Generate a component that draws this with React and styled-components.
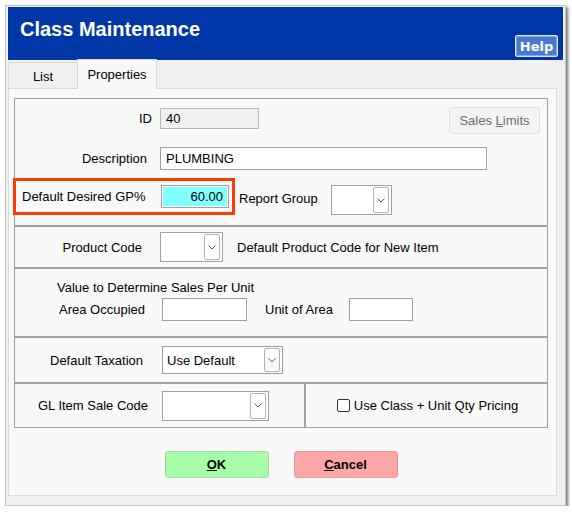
import React from 'react';
import styled, { createGlobalStyle } from 'styled-components';

const GlobalStyle = createGlobalStyle`
  html, body {
    margin: 0;
    padding: 0;
    background: #ffffff;
  }
  body {
    font-family: "Liberation Sans", Arial, sans-serif;
    font-size: 13px;
    color: #000;
  }
`;

const Window = styled.div`
  box-sizing: border-box;
  margin: 5px 0 0 5px;
  width: 561px;
  height: 501px;
  background: #f0f0f0;
  border: 1px solid #c4c4c4;
  box-shadow: 2px 2px 3px rgba(0, 0, 0, 0.55);
  padding: 1px 2px 0 2px;
  display: flex;
  flex-direction: column;
`;

const Header = styled.div`
  height: 53px;
  background: #0037a6;
  display: flex;
  justify-content: space-between;
  align-items: flex-start;
`;

const Title = styled.h1`
  margin: 10px 0 0 12px;
  font-size: 20px;
  line-height: 24px;
  font-weight: bold;
  color: #fff;
`;

const HelpButton = styled.button`
  box-sizing: border-box;
  margin: 28px 5px 0 0;
  width: 43px;
  height: 22px;
  padding: 0;
  background: #4b78cf;
  border: 1px solid #dfe6f5;
  border-radius: 2px;
  box-shadow: inset 0 0 0 1px #86a3e0;
  color: #fff;
  font-family: "DejaVu Sans", Verdana, sans-serif;
  font-weight: bold;
  font-size: 13px;
`;

const Body = styled.div`
  padding-right: 6px;
  display: flex;
  flex-direction: column;
`;

const TabStrip = styled.div`
  height: 29px;
  display: flex;
  align-items: flex-end;
  position: relative;
  z-index: 1;
  margin-bottom: -1px;
`;

const Tab = styled.div`
  box-sizing: border-box;
  width: ${p => p.$w}px;
  height: ${p => (p.$active ? 30 : 27)}px;
  background: ${p => (p.$active ? '#f9f9f9' : '#f0f0f0')};
  border: 1px solid #d9d9d9;
  border-bottom: ${p => (p.$active ? 'none' : '1px solid #d9d9d9')};
  margin-left: ${p => (p.$active ? -1 : 0)}px;
  display: flex;
  justify-content: center;
  padding-top: ${p => (p.$active ? 7 : 6)}px;
  line-height: 15px;
`;

const Panel = styled.div`
  box-sizing: border-box;
  height: 408px;
  background: #f9f9f9;
  border: 1px solid #dcdcdc;
  padding: 9px 8px 0 5px;
  display: flex;
  flex-direction: column;
`;

const Section = styled.div`
  box-sizing: border-box;
  height: ${p => p.$h}px;
  border: 1px solid #a0a0a0;
  display: flex;
  flex-direction: ${p => (p.$column ? 'column' : 'row')};
  align-items: ${p => (p.$column ? 'stretch' : 'center')};
  padding-top: ${p => p.$pt || 0}px;
`;

const Row = styled.div`
  display: flex;
  align-items: ${p => p.$align || 'center'};
  margin-top: ${p => p.$mt || 0}px;
`;

const Label = styled.span`
  box-sizing: border-box;
  width: ${p => (p.$w ? `${p.$w}px` : 'auto')};
  margin-right: ${p => p.$gap || 0}px;
  margin-left: ${p => p.$ml || 0}px;
  margin-top: ${p => p.$mt || 0}px;
  text-align: ${p => (p.$w ? 'right' : 'left')};
  line-height: 21px;
  white-space: nowrap;
`;

const TextInput = styled.div`
  box-sizing: border-box;
  width: ${p => p.$w}px;
  height: ${p => p.$h || 23}px;
  margin-top: ${p => p.$mt || 0}px;
  background: ${p => p.$bg || '#ffffff'};
  border: 1px solid ${p => p.$border || '#a0a0a0'};
  box-shadow: ${p => (p.$ring ? 'inset 0 0 0 1px #ffffff' : 'none')};
  display: flex;
  align-items: center;
  justify-content: ${p => (p.$right ? 'flex-end' : 'flex-start')};
  padding: 0 5px 0 5px;
  white-space: nowrap;
`;

const SalesLimits = styled.button`
  box-sizing: border-box;
  margin: 0 7px 0 auto;
  width: 91px;
  height: 27px;
  padding: 0;
  background: #f4f4f4;
  border: 1px solid #e0e0e0;
  border-radius: 3px;
  color: #6d6d6d;
  font-family: "Liberation Sans", Arial, sans-serif;
  font-size: 13px;
`;

const Highlight = styled.div`
  box-sizing: border-box;
  width: 222px;
  height: 37px;
  margin-left: -2px;
  border: 3px solid #ff3a0a;
  display: flex;
  align-items: center;
  padding: 0 3px;
  position: relative;
`;

const HighlightLabel = styled.span`
  flex: 1;
  padding-left: 3px;
  white-space: nowrap;
`;

const SelectBox = styled.div`
  box-sizing: border-box;
  width: ${p => p.$w}px;
  height: ${p => p.$h || 30}px;
  align-self: ${p => p.$self || 'auto'};
  background: #fff;
  border: 1px solid #a0a0a0;
  display: flex;
  align-items: stretch;
  padding: 1px 2px 1px 4px;
`;

const SelectValue = styled.span`
  flex: 1;
  display: flex;
  align-items: center;
  white-space: nowrap;
`;

const DropButton = styled.span`
  box-sizing: border-box;
  width: 16px;
  border: 1px solid #b4b4b4;
  border-radius: 2px;
  background: #fdfdfd;
  display: flex;
  align-items: center;
  justify-content: center;
`;

const Heading = styled.div`
  padding-left: 42px;
  line-height: 15px;
`;

const SplitLeft = styled.div`
  width: 289px;
  align-self: stretch;
  border-right: 2px solid #a0a0a0;
  display: flex;
  align-items: center;
`;

const SplitRight = styled.div`
  flex: 1;
  display: flex;
  align-items: center;
  justify-content: center;
  padding-left: 2px;
`;

const CheckBox = styled.span`
  box-sizing: border-box;
  width: 13px;
  height: 13px;
  border: 1px solid #333;
  border-radius: 2px;
  background: #fff;
  margin-right: 4px;
`;

const ButtonRow = styled.div`
  display: flex;
  justify-content: center;
  gap: 25px;
  margin-top: 23px;
`;

const ActionButton = styled.button`
  box-sizing: border-box;
  width: 104px;
  height: 27px;
  padding: 0;
  background: ${p => p.$bg};
  border: 1px solid ${p => p.$border};
  border-radius: 3px;
  font-family: "Liberation Sans", Arial, sans-serif;
  font-size: 13px;
  font-weight: bold;
  color: #000;
`;

const Key = styled.span`
  text-decoration: underline;
`;

const Chevron = () => (
  <svg width="8" height="5" viewBox="0 0 8 5">
    <path d="M0.5 0.5 L4 4 L7.5 0.5" fill="none" stroke="#606060" strokeWidth="1" />
  </svg>
);

const Select = ({ w, h, value, self }) => (
  <SelectBox $w={w} $h={h} $self={self}>
    <SelectValue>{value}</SelectValue>
    <DropButton>
      <Chevron />
    </DropButton>
  </SelectBox>
);

export default function App() {
  return (
    <>
      <GlobalStyle />
      <Window>
        <Header>
          <Title>Class Maintenance</Title>
          <HelpButton>Help</HelpButton>
        </Header>
        <Body>
          <TabStrip>
            <Tab $w={70}>List</Tab>
            <Tab $w={80} $active>
              Properties
            </Tab>
          </TabStrip>
          <Panel>
            <Section $h={128} $column $pt={8}>
              <Row $align="flex-start">
                <Label $w={137} $gap={8} $mt={1}>
                  ID
                </Label>
                <TextInput $w={99} $h={21} $mt={1} $bg="#f0f0f0" $border="#a9bccf">
                  40
                </TextInput>
                <SalesLimits>
                  Sales <Key>L</Key>imits
                </SalesLimits>
              </Row>
              <Row $mt={13}>
                <Label $w={132} $gap={13}>
                  Description
                </Label>
                <TextInput $w={327}>PLUMBING</TextInput>
              </Row>
              <Row $mt={8}>
                <Highlight>
                  <HighlightLabel>Default Desired GP%</HighlightLabel>
                  <TextInput $w={68} $bg="#80ffff" $ring $right>
                    60.00
                  </TextInput>
                </Highlight>
                <Label $ml={4} $gap={13} $mt={4}>
                  Report Group
                </Label>
                <Select w={61} self="flex-end" />
              </Row>
            </Section>
            <Section $h={42}>
              <Label $w={127} $gap={18}>
                Product Code
              </Label>
              <Select w={63} />
              <Label $ml={14}>Default Product Code for New Item</Label>
            </Section>
            <Section $h={69} $column $pt={11}>
              <Heading>Value to Determine Sales Per Unit</Heading>
              <Row $mt={3}>
                <Label $w={130} $gap={17}>
                  Area Occupied
                </Label>
                <TextInput $w={85} />
                <Label $ml={18} $gap={16}>
                  Unit of Area
                </Label>
                <TextInput $w={64} />
              </Row>
            </Section>
            <Section $h={46}>
              <Label $w={128} $gap={19}>
                Default Taxation
              </Label>
              <Select w={121} h={28} value="Use Default" />
            </Section>
            <Section $h={45}>
              <SplitLeft>
                <Label $w={133} $gap={14}>
                  GL Item Sale Code
                </Label>
                <Select w={107} />
              </SplitLeft>
              <SplitRight>
                <CheckBox />
                <Label>Use Class + Unit Qty Pricing</Label>
              </SplitRight>
            </Section>
            <ButtonRow>
              <ActionButton $bg="#a6ffa6" $border="#9be09b">
                <Key>O</Key>K
              </ActionButton>
              <ActionButton $bg="#ffa6a6" $border="#e39a9a">
                <Key>C</Key>ancel
              </ActionButton>
            </ButtonRow>
          </Panel>
        </Body>
      </Window>
    </>
  );
}
